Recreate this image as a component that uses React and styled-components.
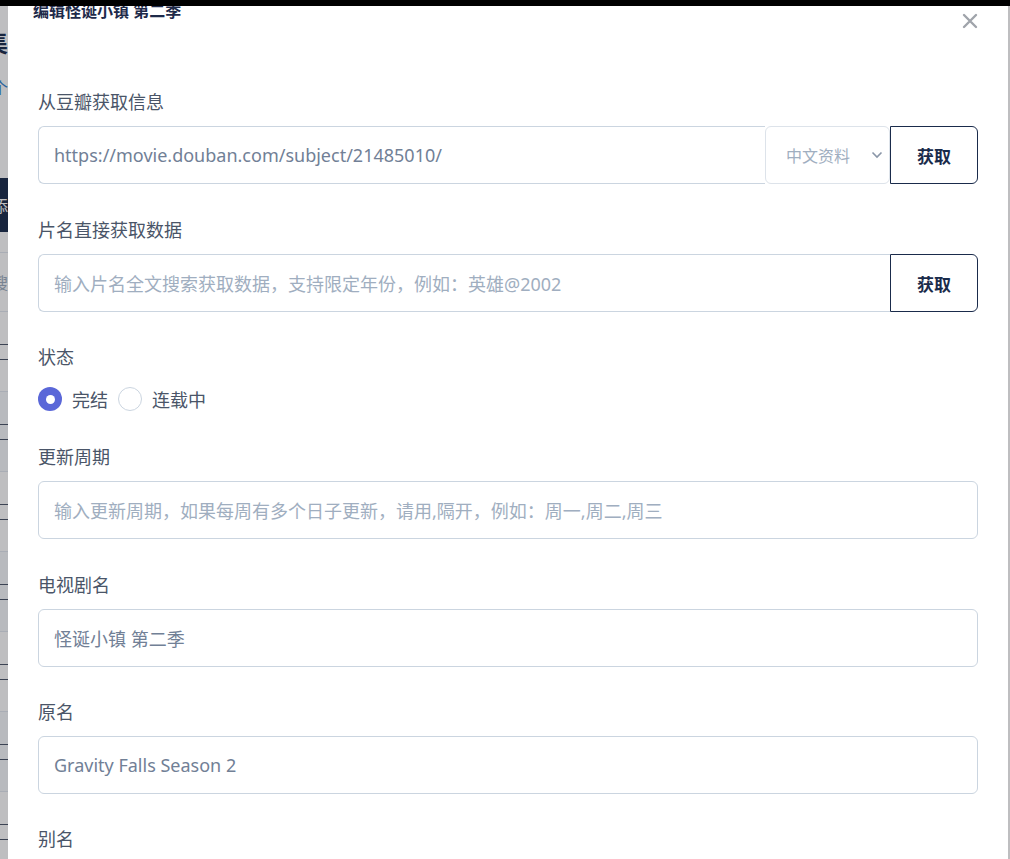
import React from "react";
import styled, { createGlobalStyle } from "styled-components";

const GlobalStyle = createGlobalStyle`
  html, body {
    margin: 0;
    padding: 0;
    height: 100%;
    overflow: hidden;
  }
  body {
    font-family: "Noto Sans", "Noto Sans CJK SC", sans-serif;
    background: #ffffff;
  }
  * { box-sizing: border-box; }
`;

const TopBar = styled.div`
  height: 6px;
  background: #000000;
`;

/* the list page that sits behind the dialog, only its left edge shows */
const BackPage = styled.div`
  width: 8px;
  overflow: hidden;
`;

const BackInner = styled.div`
  width: 60px;
  margin-left: -52px;
  padding-top: 22px;
  text-align: right;
`;

const BackTitle = styled.div`
  font-size: 24px;
  font-weight: 700;
  color: #1a2b4b;
  line-height: 30px;
`;

const BackLink = styled.div`
  margin-top: 18px;
  font-size: 16px;
  color: #3182ce;
  line-height: 24px;
`;

const BackButton = styled.div`
  margin-top: 78px;
  height: 54px;
  background: #1a2b4b;
  color: #ffffff;
  font-size: 16px;
  display: flex;
  align-items: center;
  justify-content: flex-end;
`;

const BackSearch = styled.div`
  margin-top: 20px;
  height: 60px;
  border-top: 1px solid #e2e8f0;
  border-bottom: 1px solid #e2e8f0;
  color: #a0aec0;
  font-size: 16px;
  display: flex;
  align-items: center;
  justify-content: flex-end;
`;

const BackRow = styled.div`
  height: 80px;
  border-bottom: 1px solid #e2e8f0;
  display: flex;
  flex-direction: column;
  justify-content: center;
  background: ${(p) => (p.shade ? "#f7fafc" : "#ffffff")};
`;

const BackCell = styled.div`
  height: 16px;
  border-top: 1px solid #4a5568;
  border-bottom: 1px solid #4a5568;
`;

const Overlay = styled.div`
  position: fixed;
  inset: 6px 0 0 0;
  background: rgba(20, 20, 30, 0.28);
`;

const Modal = styled.div`
  position: fixed;
  top: 6px;
  left: 8px;
  right: 2px;
  bottom: 0;
  background: #ffffff;
  overflow: hidden;
  padding: 0 30px;
`;

const Header = styled.div`
  margin-top: -7px;
  height: 91px;
`;

const Title = styled.div`
  margin-left: -5px;
  font-size: 16px;
  font-weight: 700;
  line-height: 24px;
  color: #1e2a4a;
`;

const Close = styled.div`
  position: absolute;
  top: 5px;
  right: 28px;
  width: 20px;
  height: 20px;
  display: flex;
  align-items: center;
  justify-content: center;
`;

const Group = styled.div`
  margin-bottom: ${(p) => (p.tight ? "33px" : "34px")};
`;

const Label = styled.div`
  font-size: 18px;
  line-height: 24px;
  color: #4a5568;
  margin-bottom: 12px;
`;

const InputRow = styled.div`
  display: flex;
  height: 58px;
`;

const Input = styled.div`
  flex: 1;
  height: 58px;
  border: 1px solid #cbd5e0;
  border-radius: ${(p) => (p.joined ? "6px 0 0 6px" : "6px")};
  ${(p) => (p.joined ? "border-right: none;" : "")}
  padding: 0 15px;
  display: flex;
  align-items: center;
  font-size: 18px;
  color: ${(p) => (p.placeholder ? "#a0aec0" : "#718096")};
  white-space: nowrap;
  overflow: hidden;
`;

const Select = styled.div`
  width: 125px;
  border: 1px solid #dde3ea;
  border-radius: 6px;
  padding: 0 6px 0 20px;
  display: flex;
  align-items: center;
  justify-content: space-between;
  font-size: 16px;
  color: #a0aec0;
`;

const FetchButton = styled.div`
  width: 88px;
  border: 1px solid #1a2b4b;
  border-radius: 0 6px 6px 0;
  display: flex;
  align-items: center;
  justify-content: center;
  font-size: 17px;
  font-weight: 700;
  color: #1a2b4b;
`;

const RadioRow = styled.div`
  display: flex;
  align-items: center;
  margin-top: 18px;
  height: 24px;
`;

const RadioItem = styled.label`
  display: flex;
  align-items: center;
  gap: 10px;
  margin-right: 10px;
  font-size: 18px;
  color: #4a5568;
`;

const RadioDot = styled.span`
  width: 24px;
  height: 24px;
  border-radius: 50%;
  display: flex;
  align-items: center;
  justify-content: center;
  background: ${(p) => (p.checked ? "#5a67d8" : "#ffffff")};
  border: ${(p) => (p.checked ? "none" : "1px solid #cbd5e0")};
  &::after {
    content: "";
    display: ${(p) => (p.checked ? "block" : "none")};
    width: 9px;
    height: 9px;
    border-radius: 50%;
    background: #ffffff;
  }
`;

const fields = [
  { label: "更新周期", text: "输入更新周期，如果每周有多个日子更新，请用,隔开，例如：周一,周二,周三", placeholder: true },
  { label: "电视剧名", text: "怪诞小镇 第二季" },
  { label: "原名", text: "Gravity Falls Season 2" },
];

export default function App() {
  return (
    <>
      <GlobalStyle />
      <TopBar />
      <BackPage>
        <BackInner>
          <BackTitle>剧集</BackTitle>
          <BackLink>个</BackLink>
          <BackButton>添</BackButton>
          <BackSearch>搜</BackSearch>
          {[0, 1, 2, 3, 4, 5, 6].map((i) => (
            <BackRow key={i} shade={i % 2 === 1}>
              <BackCell />
            </BackRow>
          ))}
        </BackInner>
      </BackPage>
      <Overlay />
      <Modal>
        <Header>
          <Title>编辑怪诞小镇 第二季</Title>
        </Header>
        <Close>
          <svg width="16" height="16" viewBox="0 0 16 16">
            <path d="M2 2 L14 14 M14 2 L2 14" stroke="#a0a4ab" strokeWidth="2.4" strokeLinecap="round" />
          </svg>
        </Close>

        <Group>
          <Label>从豆瓣获取信息</Label>
          <InputRow>
            <Input joined>https://movie.douban.com/subject/21485010/</Input>
            <Select>
              <span>中文资料</span>
              <svg width="12" height="8" viewBox="0 0 12 8">
                <path d="M1.5 1.5 L6 6 L10.5 1.5" fill="none" stroke="#8a96a8" strokeWidth="1.6" />
              </svg>
            </Select>
            <FetchButton>获取</FetchButton>
          </InputRow>
        </Group>

        <Group tight>
          <Label>片名直接获取数据</Label>
          <InputRow>
            <Input joined placeholder>输入片名全文搜索获取数据，支持限定年份，例如：英雄@2002</Input>
            <FetchButton>获取</FetchButton>
          </InputRow>
        </Group>

        <Group>
          <Label>状态</Label>
          <RadioRow>
            <RadioItem>
              <RadioDot checked />
              完结
            </RadioItem>
            <RadioItem>
              <RadioDot />
              连载中
            </RadioItem>
          </RadioRow>
        </Group>

        {fields.map((f, i) => (
          <Group key={f.label} tight={i > 0}>
            <Label>{f.label}</Label>
            <InputRow>
              <Input placeholder={f.placeholder}>{f.text}</Input>
            </InputRow>
          </Group>
        ))}

        <Group>
          <Label>别名</Label>
        </Group>
      </Modal>
    </>
  );
}
